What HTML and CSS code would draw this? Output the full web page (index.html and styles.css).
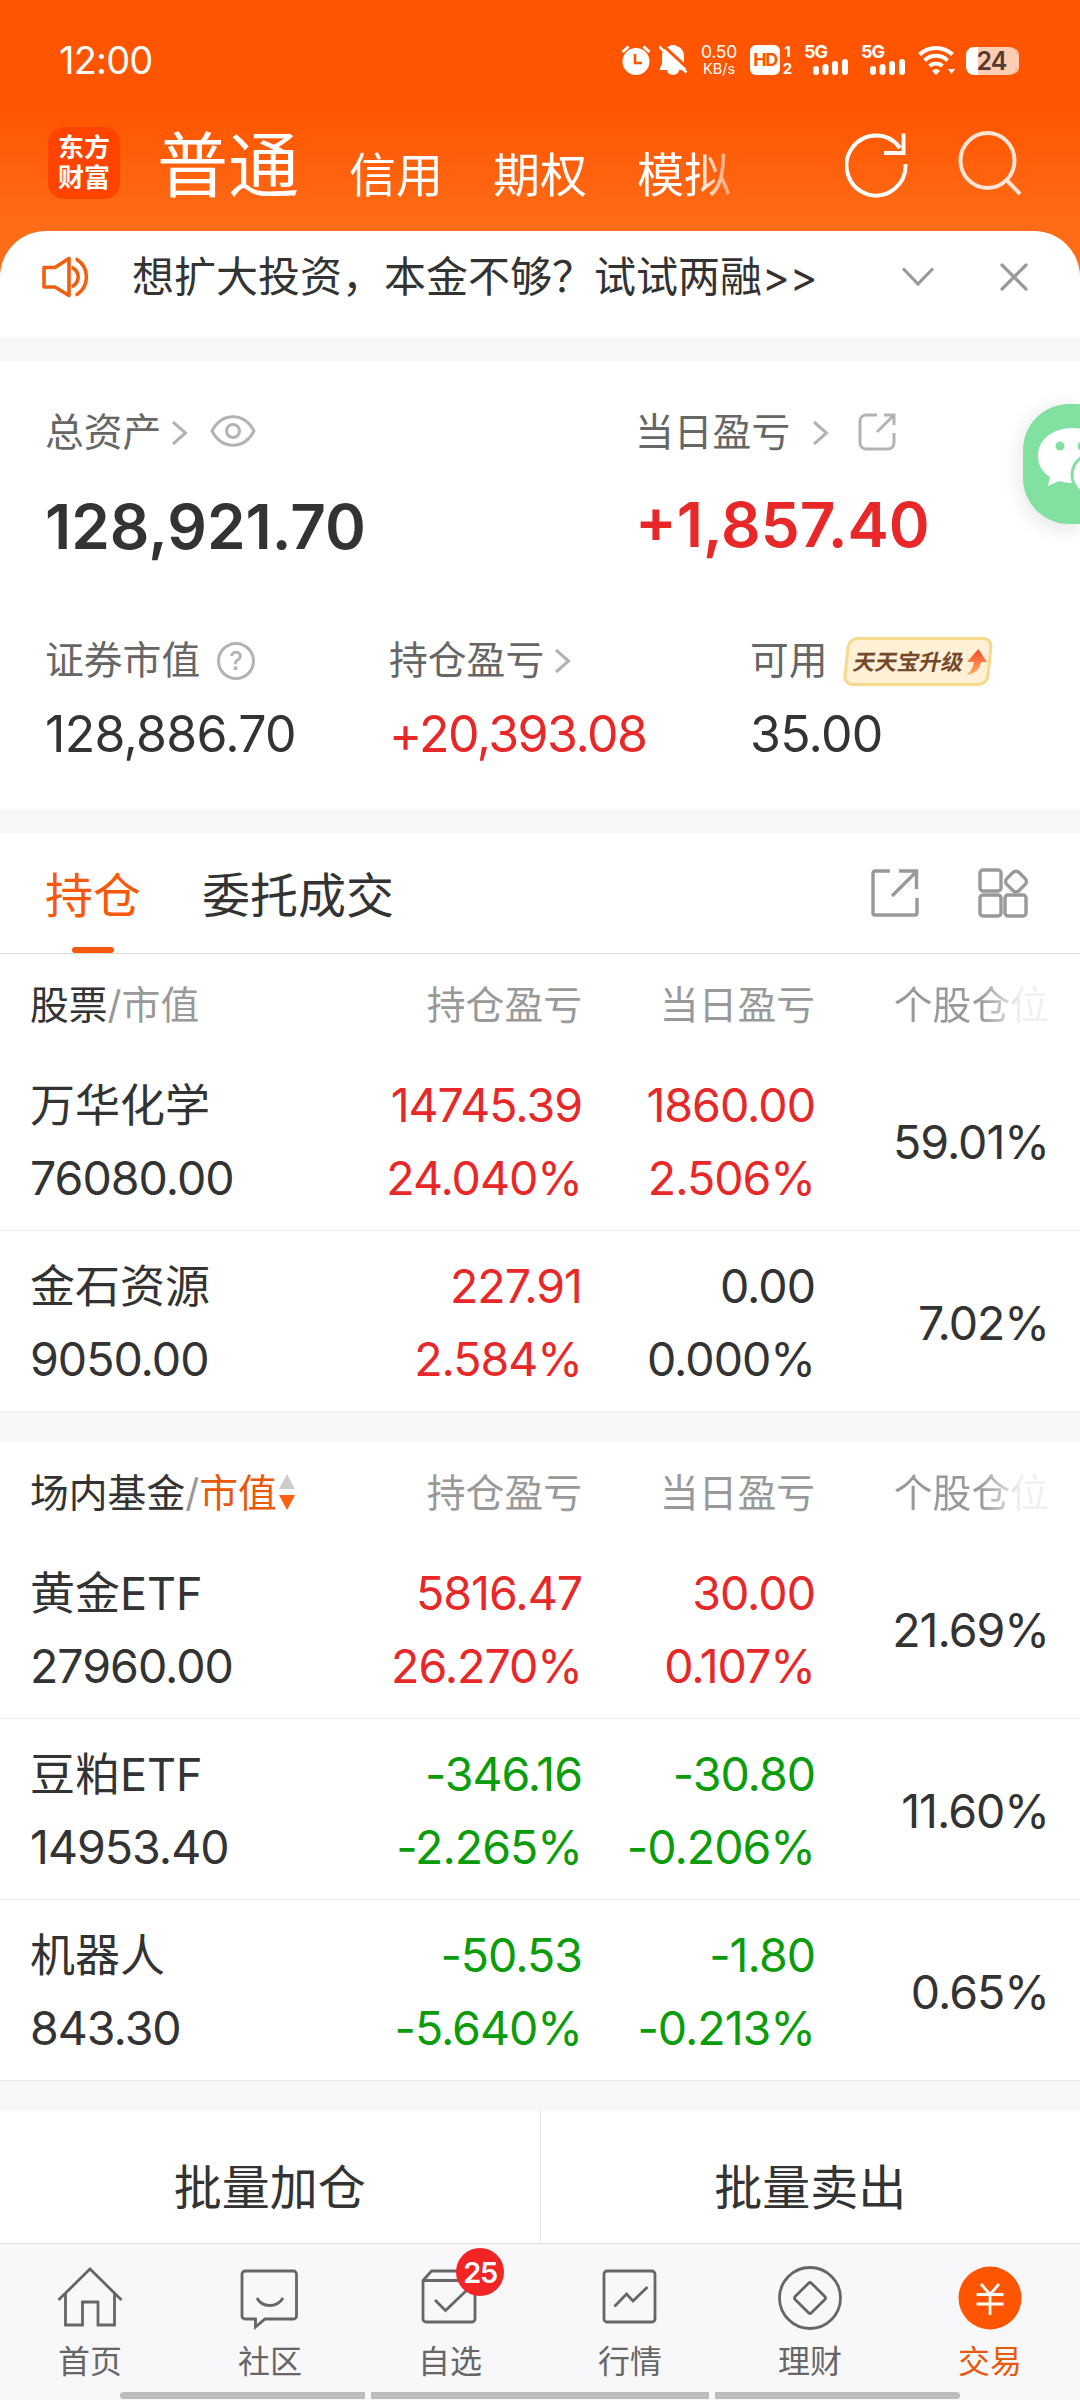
FILE: index.html
```html
<!DOCTYPE html>
<html lang="zh-CN">
<head>
  <meta charset="UTF-8">
  <meta name="viewport" content="width=device-width, initial-scale=1.0">
  <title>交易</title>
  <link rel="stylesheet" href="styles.css">
</head>
<body>
  <div class="top">
    <div class="status">
      <span class="time">12:00</span>
      <div class="status-icons">
        <svg class="alarm" width="30" height="30" viewBox="0 0 30 30"><circle cx="15" cy="16.500" r="13.500" fill="#fff"/><path d="M1.500 7L7.500 1.500M28.500 7L22.500 1.500" stroke="#fff" stroke-width="3"/><path d="M14 9v9h7" stroke="#ff5500" stroke-width="2.600" fill="none"/></svg>
        <svg class="bell" width="29" height="30" viewBox="0 0 29 30"><path d="M14 0a3 3 0 0 1 3 1c5 1 8 5 8 10v8l2 4v2H1v-2l2-4v-8c0-5 3-9 8-10a3 3 0 0 1 3-1z" fill="#fff"/><path d="M8 25h12a6 5 0 0 1-12 0z" fill="#fff"/><path d="M2 -1.500L30 24.500" stroke="#ff5500" stroke-width="3"/><path d="M0 1.500L27.500 27.500" stroke="#fff" stroke-width="2.500"/></svg>
        <div class="speed"><b>0.50</b><span>KB/s</span></div>
        <div class="hd">HD</div>
        <div class="sim"><span>1</span><span>2</span></div>
        <div class="signal"><span>5G</span><svg width="36" height="17" viewBox="0 0 36 17"><path d="M3 11v3M12.500 9v5M22 6v8M32 4v10" stroke="#fff" stroke-width="6" stroke-linecap="round"/></svg></div>
        <div class="signal"><span>5G</span><svg width="36" height="17" viewBox="0 0 36 17"><path d="M3 11v3M12.500 9v5M22 6v8M32 4v10" stroke="#fff" stroke-width="6" stroke-linecap="round"/></svg></div>
        <svg class="wifi" width="37" height="30" viewBox="0 0 37 30"><path d="M1.500 9.500a24 24 0 0 1 33 0M6.500 15.500a16.500 16.500 0 0 1 23 0M11.500 21a9.500 9.500 0 0 1 13 0" stroke="#fff" stroke-width="4" fill="none"/><path d="M14 26a5 5 0 0 1 8 0l-4 4z" fill="#fff"/><path d="M30 24h7l-3.500 5z" fill="#fff"/></svg>
        <div class="battery">24</div>
      </div>
    </div>
    <div class="header">
      <div class="logo"><span>东方</span><span>财富</span></div>
      <div class="accounts">
        <span class="current">普通</span>
        <span>信用</span>
        <span>期权</span>
        <span>模拟</span>
      </div>
      <svg class="refresh" width="64" height="66" viewBox="0 0 64 66" fill="none" stroke="#fff" stroke-width="4"><path d="M60.500 32A29.500 30 0 1 1 55 16M58.500 1.500V21H39"/></svg>
      <svg class="search" width="64" height="66" viewBox="0 0 64 66" fill="none" stroke="#ffe4d5" stroke-width="4"><ellipse cx="29.500" cy="29.500" rx="27" ry="27.500"/><path d="M48 48.500L62 63"/></svg>
    </div>
    <div class="notice">
      <svg class="speaker" width="48" height="42" viewBox="0 0 48 42" fill="none" stroke="#f06010" stroke-width="3.600" stroke-linejoin="round" stroke-linecap="round"><path d="M2 11.500H13L27 2.500V39.500L13 31H2z"/><path d="M31 12a10.500 10.500 0 0 1 0 18M35 3.500a21 21 0 0 1 0 35"/></svg>
      <span class="notice-text">想扩大投资，本金不够？试试两融&gt;&gt;</span>
      <svg class="down" width="32" height="20" viewBox="0 0 32 20" fill="none" stroke="#999" stroke-width="3.200" stroke-linecap="round"><path d="M2 2.500L16 17L30 2.500"/></svg>
      <svg class="close" width="28" height="28" viewBox="0 0 28 28" fill="none" stroke="#999" stroke-width="3.200" stroke-linecap="round"><path d="M2 2L26 26M26 2L2 26"/></svg>
    </div>
  </div>

  <div class="summary">
    <div class="summary-main">
      <div>
        <div class="label"><span>总资产</span><svg class="arrow near" width="17" height="26" viewBox="0 0 17 26"><path d="M2 2L14.500 13L2 24"/></svg><svg class="eye" width="46" height="32" viewBox="0 0 46 32"><path d="M2 16C12 -3 34 -3 44 16C34 35 12 35 2 16z"/><circle cx="23" cy="16" r="6.500"/></svg></div>
        <div class="value">128,921.70</div>
      </div>
      <div>
        <div class="label"><span>当日盈亏</span><svg class="arrow far" width="17" height="26" viewBox="0 0 17 26"><path d="M2 2L14.500 13L2 24"/></svg><svg class="share-small" width="38" height="38" viewBox="0 0 38 38"><path d="M19 2H8a6 6 0 0 0-6 6v22a6 6 0 0 0 6 6h22a6 6 0 0 0 6-6V20M26 2h10v10M36 2L19 19"/></svg></div>
        <div class="value red lift">+1,857.40</div>
      </div>
    </div>
    <div class="summary-sub">
      <div>
        <div class="label"><span>证券市值</span><b class="help">?</b></div>
        <div class="value">128,886.70</div>
      </div>
      <div>
        <div class="label"><span>持仓盈亏</span><svg class="arrow near" width="17" height="26" viewBox="0 0 17 26"><path d="M2 2L14.500 13L2 24"/></svg></div>
        <div class="value red">+20,393.08</div>
      </div>
      <div>
        <div class="label"><span>可用</span><div class="promo"><b>天天宝升级</b><svg width="20" height="26" viewBox="0 0 20 26"><defs><linearGradient id="up" x1="0" y1="0" x2="0" y2="1"><stop offset="0" stop-color="#f8482c"/><stop offset="1" stop-color="#ffb060"/></linearGradient></defs><path d="M10 0L20 13H14C14 20 9 25 1 26C5 22 7 18 7 13H0z" fill="url(#up)"/></svg></div></div>
        <div class="value">35.00</div>
      </div>
    </div>
  </div>

  <div class="tabs">
    <span class="tab active">持仓</span>
    <span class="tab">委托成交</span>
    <svg class="share" width="48" height="48" viewBox="0 0 48 48" fill="none" stroke="#999" stroke-width="3.400"><path d="M19 2H4a2 2 0 0 0-2 2v40a2 2 0 0 0 2 2h40a2 2 0 0 0 2-2V29M28 2h17.500v18M45 3L21 27"/></svg>
    <svg class="grid-icon" width="50" height="50" viewBox="0 0 50 50" fill="none" stroke="#999" stroke-width="3.400"><rect x="2" y="2" width="21" height="21" rx="3"/><rect x="2" y="27" width="21" height="21" rx="3"/><rect x="27" y="27" width="21" height="21" rx="3"/><rect x="29.500" y="5" width="17" height="17" rx="4" transform="rotate(45 38 13.500)"/></svg>
  </div>

  <div class="holdings">
    <div class="row head">
      <div class="title">股票<i>/市值</i></div>
      <div>持仓盈亏</div>
      <div>当日盈亏</div>
      <div class="fade">个股仓位</div>
    </div>
    <div class="row">
      <div><p class="name">万华化学</p><p>76080.00</p></div>
      <div class="red"><p>14745.39</p><p>24.040%</p></div>
      <div class="red"><p>1860.00</p><p>2.506%</p></div>
      <div>59.01%</div>
    </div>
    <div class="row">
      <div><p class="name">金石资源</p><p>9050.00</p></div>
      <div class="red"><p>227.91</p><p>2.584%</p></div>
      <div><p>0.00</p><p>0.000%</p></div>
      <div>7.02%</div>
    </div>
  </div>

  <div class="holdings">
    <div class="row head">
      <div class="title">场内基金<i>/</i><em>市值</em><svg class="sort" width="16" height="36" viewBox="0 0 16 36"><path d="M8 0L16 15H0z" fill="#ccc"/><path d="M8 36L0 21H16z" fill="#ff5f10"/></svg></div>
      <div>持仓盈亏</div>
      <div>当日盈亏</div>
      <div class="fade">个股仓位</div>
    </div>
    <div class="row">
      <div><p class="name">黄金ETF</p><p>27960.00</p></div>
      <div class="red"><p>5816.47</p><p>26.270%</p></div>
      <div class="red"><p>30.00</p><p>0.107%</p></div>
      <div>21.69%</div>
    </div>
    <div class="row">
      <div><p class="name">豆粕ETF</p><p>14953.40</p></div>
      <div class="green"><p>-346.16</p><p>-2.265%</p></div>
      <div class="green"><p>-30.80</p><p>-0.206%</p></div>
      <div>11.60%</div>
    </div>
    <div class="row">
      <div><p class="name">机器人</p><p>843.30</p></div>
      <div class="green"><p>-50.53</p><p>-5.640%</p></div>
      <div class="green"><p>-1.80</p><p>-0.213%</p></div>
      <div>0.65%</div>
    </div>
  </div>

  <div class="actions">
    <div>批量加仓</div>
    <div>批量卖出</div>
  </div>

  <div class="nav">
    <div class="nav-item"><svg width="66" height="64" viewBox="0 0 66 64"><path d="M1.500 34L33 3L64.500 34M8.500 28V59H25.500V36H41V59H57.500V28"/></svg>首页</div>
    <div class="nav-item"><svg width="66" height="64" viewBox="0 0 66 64"><path d="M7.500 5h49a3 3 0 0 1 3 3v42a3 3 0 0 1-3 3H28l-9.500 8V53H8a3 3 0 0 1-3-3V8a3 3 0 0 1 3-3zM20 32c5 10 20 10 26 0"/></svg>社区</div>
    <div class="nav-item"><svg width="66" height="64" viewBox="0 0 66 64"><path d="M6 14.500V53a3 3 0 0 0 3 3h46a3 3 0 0 0 3-3V14.500L50 5H14.500zM6 14.500H58M18 34L28.500 44.500L50 24"/></svg><span class="count">25</span>自选</div>
    <div class="nav-item"><svg width="66" height="64" viewBox="0 0 66 64"><rect x="7" y="5" width="51" height="51" rx="3"/><path d="M17.500 40.500L29.500 28L36 35L50.500 21"/></svg>行情</div>
    <div class="nav-item"><svg width="66" height="64" viewBox="0 0 66 64"><circle cx="33" cy="32" r="30.500"/><rect x="21.500" y="20.500" width="23" height="23" rx="2" transform="rotate(45 33 32)"/></svg>理财</div>
    <div class="nav-item on"><svg width="66" height="64" viewBox="0 0 66 64"><circle class="coin" cx="33" cy="32" r="31.500"/><path class="yen" d="M24 18L33 28.500L42 18M19.500 28.500H46.500M19.500 38H46.500M33 28.500V49"/></svg>交易</div>
    <div class="home-bar"><i></i><i></i><i></i></div>
  </div>

  <div class="wechat">
    <svg width="57" height="120" viewBox="0 0 57 120"><path d="M50 24C29 24 15 36 15 52c0 9 4 16 12 21l-2 9 11-5c5 1.500 9 2 14 2 22 0 36-12 36-27S71 24 50 24z" fill="#fff"/><circle cx="37" cy="42" r="4.500" fill="#80e1a1"/><circle cx="59" cy="42" r="4.500" fill="#80e1a1"/><ellipse cx="78" cy="71" rx="29" ry="24" fill="#fff" stroke="#80e1a1" stroke-width="3"/></svg>
  </div>
</body>
</html>
```
FILE: styles.css
```css
* {
  box-sizing: border-box;
}
body {
  margin: 0;
  width: 1080px;
  height: 2400px;
  position: relative;
  overflow: hidden;
  background: #f7f8fa;
  color: #333;
  font-family: Inter, "Noto Sans CJK SC", sans-serif;
}
p {
  margin: 0;
}
svg {
  display: block;
  flex: none;
}
.red {
  color: #e82828;
}
.green {
  color: #0a9c0a;
}

/* header */
.top {
  background: linear-gradient(#ff5500 110px, #ff6c18 225px, #ff6c18);
}
.status {
  display: flex;
  justify-content: space-between;
  align-items: center;
  height: 120px;
  padding: 0 60px 0 59px;
  color: #fff;
}
.time {
  font-size: 38px;
  letter-spacing: -0.8px;
  line-height: 50px;
}
.status-icons {
  display: flex;
  align-items: center;
}
.bell {
  margin-left: 8px;
}
.speed {
  display: flex;
  flex-direction: column;
  align-items: center;
  width: 40px;
  margin-left: 11px;
}
.speed b {
  font-size: 17.5px;
  font-weight: 400;
  letter-spacing: -0.3px;
  line-height: 17px;
}
.speed span {
  font-size: 14.5px;
  line-height: 17px;
}
.hd {
  width: 30px;
  height: 30px;
  margin-left: 11px;
  border-radius: 6px;
  background: #fff;
  color: #ff5500;
  font-size: 18px;
  font-weight: 700;
  letter-spacing: -1.5px;
  line-height: 30px;
  text-align: center;
}
.sim {
  display: flex;
  flex-direction: column;
  width: 11px;
  margin: 0 11px 0 2px;
  font-size: 15px;
  font-weight: 700;
  line-height: 17px;
  text-align: center;
}
.signal {
  width: 45px;
  height: 30px;
  margin-right: 12px;
  font-size: 18px;
  font-weight: 700;
  letter-spacing: -1px;
  line-height: 14px;
}
.signal span {
  display: block;
  height: 13px;
}
.signal svg {
  margin-left: 9px;
}
.battery {
  width: 51px;
  height: 28px;
  margin: 1px 3px 0 11px;
  border-radius: 8px;
  background: linear-gradient(90deg, #fff 12px, #ffccb4 12px);
  box-shadow: 3px 0 0 -1px #ffccb4;
  color: #553a30;
  font-size: 25px;
  font-weight: 600;
  letter-spacing: -1px;
  line-height: 28px;
  text-align: center;
}
.header {
  display: flex;
  align-items: flex-start;
  height: 111px;
  padding: 7px 0 0 48px;
}
.logo {
  display: flex;
  flex-direction: column;
  justify-content: center;
  width: 72px;
  height: 72px;
  border-radius: 16px;
  background: #ff4400;
  color: #fff;
  font-size: 26px;
  font-weight: 700;
  line-height: 30px;
  text-align: center;
}
.accounts {
  display: flex;
  align-items: flex-start;
  width: 725px;
  padding-left: 37px;
  color: #fff;
  font-size: 47px;
  line-height: 72px;
  -webkit-mask-image: linear-gradient(90deg, #000 575px, transparent 635px);
  mask-image: linear-gradient(90deg, #000 575px, transparent 635px);
}
.accounts span {
  padding-top: 12px;
  margin-right: 50px;
}
.accounts .current {
  padding-top: 2px;
  font-size: 71px;
}
.refresh {
  margin-top: 5px;
}
.search {
  margin: 4px 0 0 49px;
}
.notice {
  display: flex;
  align-items: center;
  height: 106px;
  padding: 0 52px 14px 42px;
  border-radius: 46px 46px 0 0;
  background: #fff;
}
.notice-text {
  flex: 1;
  padding-left: 42px;
  font-size: 42px;
  line-height: 60px;
}
.down {
  margin-right: 1px;
}
.close {
  margin-left: 65px;
}

/* assets */
.summary {
  height: 448px;
  margin-top: 24px;
  padding: 42px 0 0 45px;
  background: #fff;
}
.summary-main {
  display: grid;
  grid-template-columns: 590px 1fr;
}
.summary-sub {
  display: grid;
  grid-template-columns: 344px 361px 1fr;
  margin-top: 64px;
}
.label {
  display: flex;
  align-items: center;
  height: 60px;
  color: #666;
  font-size: 38.8px;
}
.label > span {
  line-height: 60px;
  padding-bottom: 2px;
}
.label > svg {
  fill: none;
  stroke: #b3b3b3;
  stroke-width: 3;
}
.near {
  margin-left: 10px;
}
.far {
  margin-left: 22px;
}
.eye {
  margin: -4px 0 0 22px;
}
.share-small {
  margin: -2px 0 0 29px;
}
.summary-main .value {
  margin-top: 24px;
  font-size: 62px;
  font-weight: 600;
  letter-spacing: 0;
  line-height: 80px;
}
.summary-main .lift {
  padding-bottom: 2px;
  margin-top: 22px;
}
.summary-sub .value {
  margin-top: 13px;
  font-size: 50px;
  letter-spacing: -0.7px;
  line-height: 60px;
}
.summary-sub .red {
  letter-spacing: -1.5px;
}
.help {
  width: 38px;
  height: 38px;
  margin-left: 17px;
  border: 3px solid #b3b3b3;
  border-radius: 50%;
  color: #b3b3b3;
  font-size: 26px;
  font-weight: 500;
  line-height: 32px;
  text-align: center;
}
.promo {
  display: flex;
  align-items: center;
  width: 146px;
  height: 49px;
  margin-left: 17px;
  padding-left: 6px;
  border: 3px solid #f7d98c;
  border-radius: 10px;
  background: #fff0d6;
  transform: skewX(-6deg);
}
.promo b {
  margin: -3px 3px 0 0;
  color: #744a2c;
  font-size: 22px;
  transform: skewX(-6deg);
}

/* tabs */
.tabs {
  display: flex;
  align-items: center;
  height: 121px;
  margin-top: 24px;
  padding: 0 52px 0 45px;
  border-bottom: 1px solid #ddd;
  background: #fff;
  font-size: 48px;
}
.tab {
  display: flex;
  position: relative;
  align-items: center;
  height: 120px;
  padding-bottom: 3px;
  margin-right: 61px;
}
.tab.active {
  color: #f7590a;
}
.tab.active::after {
  content: "";
  position: absolute;
  left: 27px;
  bottom: 0;
  width: 42px;
  height: 6px;
  border-radius: 3px;
  background: #f7590a;
}
.share {
  margin-left: auto;
}
.grid-icon {
  margin-left: 59px;
}

/* positions */
.holdings {
  margin-bottom: 30px;
  background: #fff;
}
.row {
  display: grid;
  grid-template-columns: 319px 233px 233px 234px;
  align-items: center;
  height: 181px;
  padding: 4px 31px 0 30px;
  border-bottom: 1px solid #ebecee;
  font-size: 46.5px;
  letter-spacing: -1px;
  line-height: 73px;
  text-align: right;
}
.row div:first-child {
  text-align: left;
}
.row .name {
  font-size: 45px;
  letter-spacing: 0;
}
.row.head {
  height: 96px;
  border: 0;
  color: #999;
  font-size: 38.8px;
  letter-spacing: 0;
}
.title {
  display: flex;
  align-items: center;
  color: #333;
}
.title i {
  color: #999;
  font-style: normal;
}
.title em {
  color: #e8590c;
  font-style: normal;
}
.sort {
  margin-left: 2px;
}
.fade {
  -webkit-mask-image: linear-gradient(90deg, #000 165px, rgba(0, 0, 0, 0.15) 205px);
  mask-image: linear-gradient(90deg, #000 165px, rgba(0, 0, 0, 0.15) 205px);
}

/* bottom */
.actions {
  display: flex;
  height: 132px;
  background: #fff;
  font-size: 48px;
}
.actions div {
  flex: 1;
  padding-top: 41px;
  line-height: 72px;
  text-align: center;
}
.actions div:first-child {
  border-right: 1px solid #e6e6e6;
}
.nav {
  display: flex;
  flex-wrap: wrap;
  height: 157px;
  border-top: 1px solid #ddd;
  background: #f8f8fa;
}
.nav-item {
  display: flex;
  position: relative;
  flex-direction: column;
  align-items: center;
  width: 180px;
  height: 146px;
  padding-top: 22px;
  color: #666;
  font-size: 32px;
  line-height: 64px;
}
.nav-item svg {
  fill: none;
  stroke: #666;
  stroke-width: 2.8;
}
.nav-item.on {
  color: #e8590c;
}
.nav-item .coin {
  fill: #ff5500;
  stroke: none;
}
.nav-item .yen {
  stroke: #fff;
}
.count {
  position: absolute;
  left: 96px;
  top: 4px;
  width: 48px;
  height: 48px;
  border-radius: 50%;
  background: #f22424;
  color: #fff;
  font-size: 29px;
  font-weight: 600;
  letter-spacing: -1.5px;
  line-height: 49px;
  text-align: center;
}
.home-bar {
  display: flex;
  gap: 6px;
  width: 840px;
  height: 7px;
  margin: 0 auto;
}
.home-bar i {
  flex: 245;
  background: #bcbcbc;
}
.home-bar i:nth-child(2) {
  flex: 338;
}
.home-bar i:first-child {
  border-radius: 4px 0 0 4px;
}
.home-bar i:last-child {
  border-radius: 0 4px 4px 0;
}

/* floating share button */
.wechat {
  position: absolute;
  right: 0;
  top: 404px;
  width: 57px;
  height: 120px;
  border-radius: 46px 0 0 46px;
  background: #80e1a1;
  box-shadow: 0 4px 22px rgba(0, 0, 0, 0.12);
}
```
